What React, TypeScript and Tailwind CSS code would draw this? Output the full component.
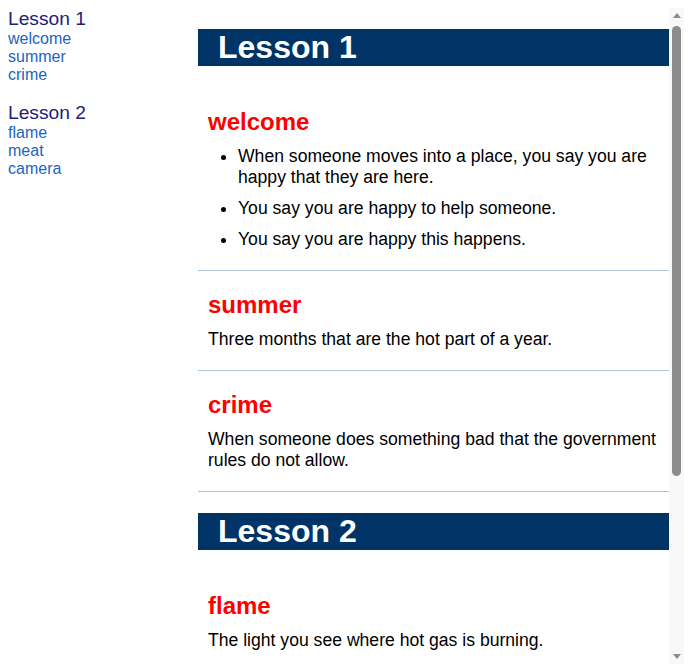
import React from 'react';

interface Word {
  word: string;
  meanings: string[];
  list?: boolean;
}

interface Lesson {
  title: string;
  words: Word[];
}

const lessons: Lesson[] = [
  {
    title: 'Lesson 1',
    words: [
      {
        word: 'welcome',
        list: true,
        meanings: [
          'When someone moves into a place, you say you are happy that they are here.',
          'You say you are happy to help someone.',
          'You say you are happy this happens.',
        ],
      },
      { word: 'summer', meanings: ['Three months that are the hot part of a year.'] },
      {
        word: 'crime',
        meanings: ['When someone does something bad that the government rules do not allow.'],
      },
    ],
  },
  {
    title: 'Lesson 2',
    words: [
      { word: 'flame', meanings: ['The light you see where hot gas is burning.'] },
      { word: 'meat', meanings: ['The part of an animal that people eat.'] },
      {
        word: 'camera',
        meanings: ['A machine that you use to take pictures or to make a film of something.'],
      },
    ],
  },
];

function Sidebar() {
  return (
    <nav className="w-[190px] shrink-0">
      {lessons.map((lesson) => (
        <div key={lesson.title} className="mb-[17px]">
          <div className="text-[19.2px] leading-[22px] text-[#1c2278]">{lesson.title}</div>
          {lesson.words.map((w) => (
            <a key={w.word} href={`#${w.word}`} className="block text-[16px] leading-[18.2px] text-[#2163bd]">
              {w.word}
            </a>
          ))}
        </div>
      ))}
    </nav>
  );
}

function WordSection({ item }: { item: Word }) {
  return (
    <section id={item.word} className="px-[10px] pt-5 pb-5 border-b border-[#b0c4de]">
      <h2 className="text-[24px] leading-[27px] font-bold text-[#ff0000] mb-[11px]">{item.word}</h2>
      {item.list ? (
        <ul className="list-disc pl-[30px] space-y-[10px]">
          {item.meanings.map((m) => (
            <li key={m}>{m}</li>
          ))}
        </ul>
      ) : (
        item.meanings.map((m) => <p key={m}>{m}</p>)
      )}
    </section>
  );
}

// static look of the classic vertical scrollbar beside the lesson pane
function ScrollBar() {
  return (
    <div className="w-[15px] shrink-0 bg-[#f8f8f8] flex flex-col items-center">
      <div className="h-[15px] flex items-center justify-center">
        <div className="w-0 h-0 border-x-[4.5px] border-x-transparent border-b-[5px] border-b-[#8c8c8c]" />
      </div>
      <div className="mt-[3px] w-[9px] h-[450px] rounded-full bg-[#8c8c8c]" />
      <div className="flex-1" />
      <div className="h-[15px] flex items-center justify-center">
        <div className="w-0 h-0 border-x-[4.5px] border-x-transparent border-t-[5px] border-t-[#8c8c8c]" />
      </div>
    </div>
  );
}

export default function App() {
  return (
    <div className="h-[672px] p-2 flex bg-white font-['Liberation_Sans',Arial,sans-serif]">
      <Sidebar />
      <div className="flex-1 min-w-0 flex">
        <main className="flex-1 min-w-0 overflow-hidden text-[17.6px] leading-[21px] text-black">
          {lessons.map((lesson) => (
            <div key={lesson.title}>
              <h1 className="mt-[21px] mb-[22px] bg-[#003366] pl-5 text-[32px] leading-[36.8px] font-bold text-white">
                {lesson.title}
              </h1>
              {lesson.words.map((w) => (
                <WordSection key={w.word} item={w} />
              ))}
            </div>
          ))}
        </main>
        <ScrollBar />
      </div>
    </div>
  );
}
